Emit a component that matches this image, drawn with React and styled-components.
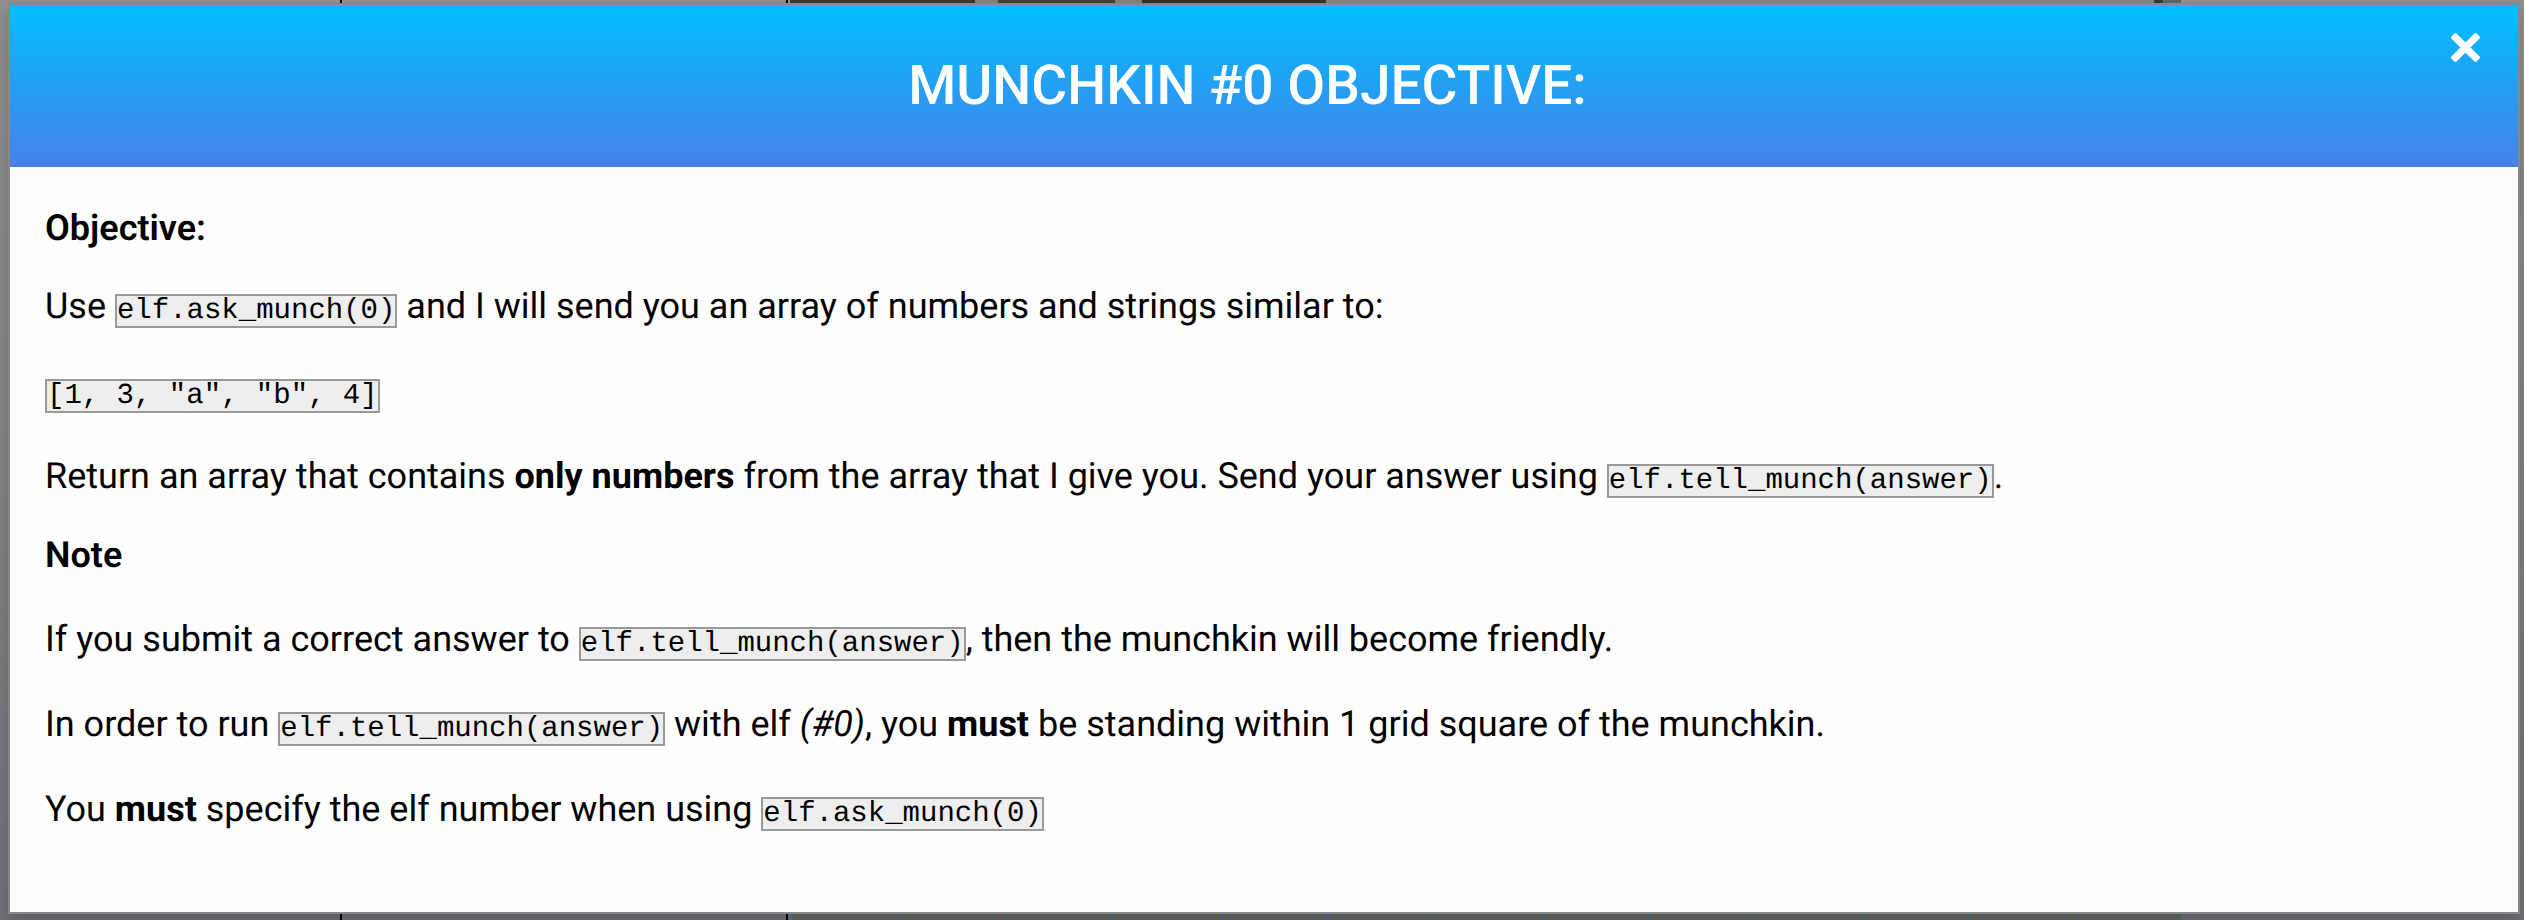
import React from 'react';
import styled, { createGlobalStyle } from 'styled-components';

const GlobalStyle = createGlobalStyle`
  * { box-sizing: border-box; }
  body { margin: 0; background: #808284; }
`;

const Backdrop = styled.div`
  min-height: 100vh;
  padding: 3px 4px 6px 8px;
  display: flex;
  font-family: Roboto, sans-serif;
  text-rendering: geometricPrecision;
  color: #000;
  background:
    linear-gradient(#000, #000) 340px 0 / 2px 100% no-repeat,
    linear-gradient(#000, #000) 786px 0 / 2px 100% no-repeat,
    linear-gradient(90deg, #3a3835 0 185px, #7d8284 185px 208px, #3d4a2c 208px 325px, #7d8284 325px 352px, #33322f 352px 536px, #7b8385 536px 1364px, #2a4038 1364px 1373px, #58686f 1373px 1391px) 790px 0 / 1391px 3px no-repeat,
    repeating-linear-gradient(90deg, #566880 0 2px, #626868 2px 107px) 792px 100% / 1389px 6px no-repeat,
    linear-gradient(#909090, #858585 50%, #707276);
`;

const Dialog = styled.section`
  flex: 1;
  display: flex;
  flex-direction: column;
  border: 2px solid #888;
  background: #fefefe;
  background-clip: padding-box;
  box-shadow: 0 8px 16px rgba(0, 0, 0, 0.2);
`;

const Header = styled.header`
  display: flex;
  align-items: flex-start;
  height: 162px;
  padding: 28px 36px;
  background: linear-gradient(#00bfff, #4680ea);
  color: #fff;
`;

const Title = styled.h1`
  flex: 1;
  margin: 21px 0 0;
  font-size: 55px;
  line-height: 64px;
  font-weight: 500;
  text-align: center;
`;

const CloseButton = styled.button`
  display: flex;
  padding: 0;
  border: 0;
  background: none;
  color: inherit;
  cursor: pointer;
`;

const Body = styled.div`
  display: flex;
  flex-direction: column;
  gap: 36px;
  padding: 46px 35px 40px;
  font-size: 36px;
  line-height: 42px;
`;

const Section = styled.section`
  display: flex;
  flex-direction: column;
  gap: 42px;
`;

const Heading = styled.h2`
  margin: 0;
  font-size: 36px;
  line-height: ${({ $compact }) => ($compact ? '30px' : '42px')};
  font-weight: 600;
`;

const Text = styled.p`
  margin: 0;
`;

const Strong = styled.strong`
  font-weight: 700;
`;

const Code = styled.code`
  display: inline-block;
  border: 2px solid #999;
  background: #eee;
  font: 29px/30px 'Liberation Mono', monospace;
`;

export default function App() {
  return (
    <>
      <GlobalStyle />
      <Backdrop>
        <Dialog role="dialog" aria-labelledby="title">
          <Header>
            <Title id="title">MUNCHKIN #0 OBJECTIVE:</Title>
            <CloseButton type="button" aria-label="Close">
              <svg width="33" height="29" viewBox="-2 0 33 29" fill="currentColor" stroke="currentColor" strokeWidth="3" strokeLinejoin="round" aria-hidden="true">
                <path d="M4.5 1.5 14.5 11.5 24.5 1.5 27.5 4.5 17.5 14.5 27.5 24.5 24.5 27.5 14.5 17.5 4.5 27.5 1.5 24.5 11.5 14.5 1.5 4.5Z" />
              </svg>
            </CloseButton>
          </Header>
          <Body>
            <Section>
              <Heading $compact>Objective:</Heading>
              <Text>Use <Code>elf.ask_munch(0)</Code> and I will send you an array of numbers and strings similar to:</Text>
              <Text><Code>[1, 3, "a", "b", 4]</Code></Text>
              <Text>Return an array that contains <Strong>only numbers</Strong> from the array that I give you. Send your answer using <Code>elf.tell_munch(answer)</Code>.</Text>
            </Section>
            <Section>
              <Heading>Note</Heading>
              <Text>If you submit a correct answer to <Code>elf.tell_munch(answer)</Code>, then the munchkin will become friendly.</Text>
              <Text>In order to run <Code>elf.tell_munch(answer)</Code> with elf <em>(#0)</em>, you <Strong>must</Strong> be standing within 1 grid square of the munchkin.</Text>
              <Text>You <Strong>must</Strong> specify the elf number when using <Code>elf.ask_munch(0)</Code></Text>
            </Section>
          </Body>
        </Dialog>
      </Backdrop>
    </>
  );
}
